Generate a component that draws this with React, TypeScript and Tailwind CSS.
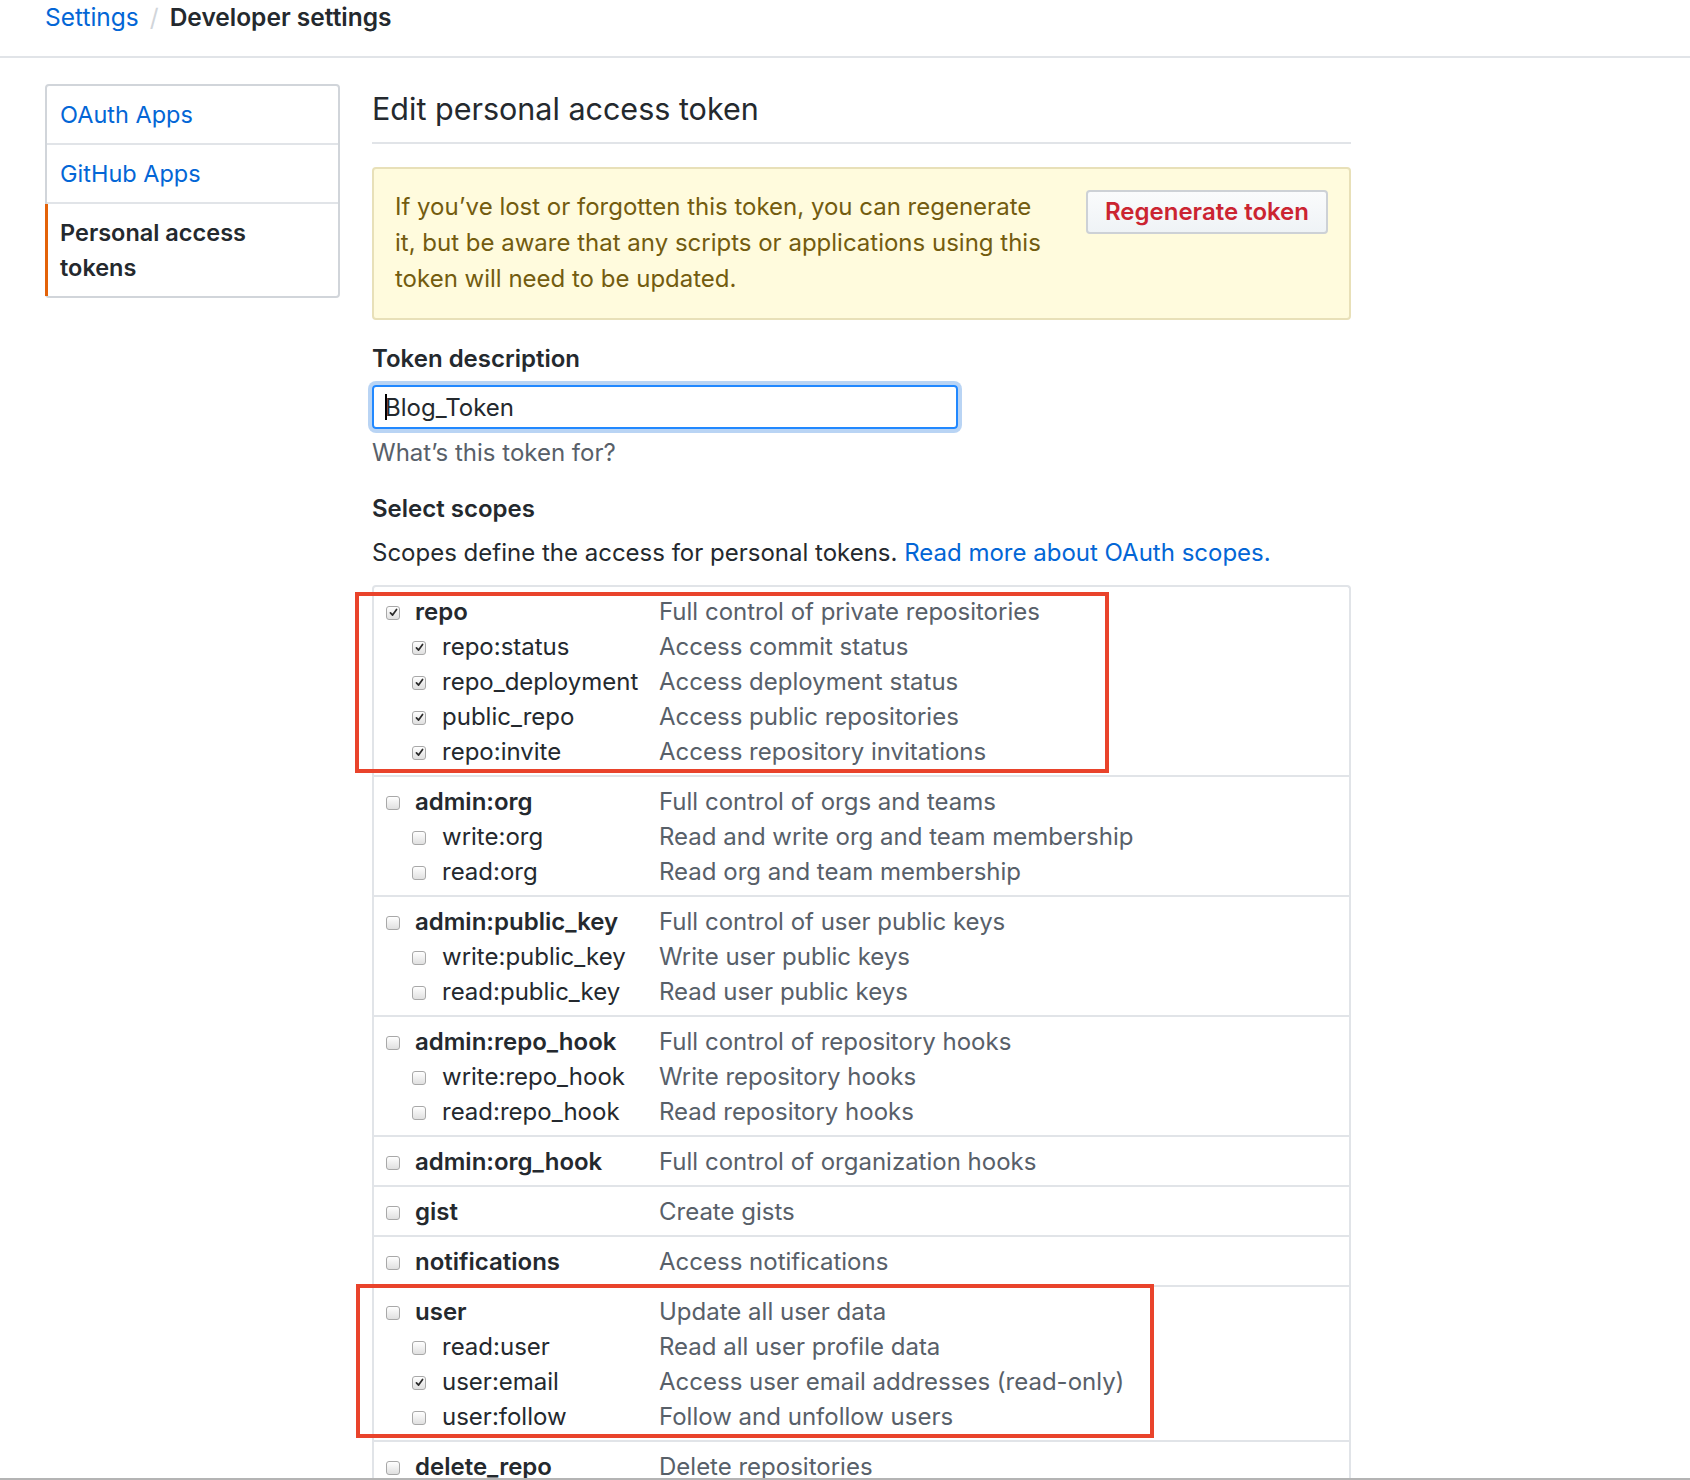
import React from 'react'

type Scope = { name: string; desc: string; checked?: boolean }
type Group = { parent: Scope; children?: Scope[] }

const groups: Group[] = [
  {
    parent: { name: 'repo', desc: 'Full control of private repositories', checked: true },
    children: [
      { name: 'repo:status', desc: 'Access commit status', checked: true },
      { name: 'repo_deployment', desc: 'Access deployment status', checked: true },
      { name: 'public_repo', desc: 'Access public repositories', checked: true },
      { name: 'repo:invite', desc: 'Access repository invitations', checked: true },
    ],
  },
  {
    parent: { name: 'admin:org', desc: 'Full control of orgs and teams' },
    children: [
      { name: 'write:org', desc: 'Read and write org and team membership' },
      { name: 'read:org', desc: 'Read org and team membership' },
    ],
  },
  {
    parent: { name: 'admin:public_key', desc: 'Full control of user public keys' },
    children: [
      { name: 'write:public_key', desc: 'Write user public keys' },
      { name: 'read:public_key', desc: 'Read user public keys' },
    ],
  },
  {
    parent: { name: 'admin:repo_hook', desc: 'Full control of repository hooks' },
    children: [
      { name: 'write:repo_hook', desc: 'Write repository hooks' },
      { name: 'read:repo_hook', desc: 'Read repository hooks' },
    ],
  },
  { parent: { name: 'admin:org_hook', desc: 'Full control of organization hooks' } },
  { parent: { name: 'gist', desc: 'Create gists' } },
  { parent: { name: 'notifications', desc: 'Access notifications' } },
  {
    parent: { name: 'user', desc: 'Update all user data' },
    children: [
      { name: 'read:user', desc: 'Read all user profile data' },
      { name: 'user:email', desc: 'Access user email addresses (read-only)', checked: true },
      { name: 'user:follow', desc: 'Follow and unfollow users' },
    ],
  },
  { parent: { name: 'delete_repo', desc: 'Delete repositories' } },
]

function Checkbox({ checked }: { checked?: boolean }) {
  return (
    <span className="mt-[3px] w-[14px] h-[14px] shrink-0 rounded-[3px] border border-[#a8a8a8] bg-gradient-to-b from-white to-[#e0e0e0] flex items-center justify-center">
      {checked && (
        <svg viewBox="0 0 10 10" className="w-[9px] h-[9px]">
          <path d="M1.6 5.4 L4 7.9 L8.4 1.6" stroke="#2b2b2b" strokeWidth="1.9" fill="none" strokeLinecap="round" strokeLinejoin="round" />
        </svg>
      )}
    </span>
  )
}

function ScopeRow({ scope, child }: { scope: Scope; child?: boolean }) {
  return (
    <div className="flex h-[35px] items-center">
      <div className={`w-[285px] shrink-0 flex items-center ${child ? 'pl-[38px]' : 'pl-[12px]'}`}>
        <Checkbox checked={scope.checked} />
        <span className={child ? 'ml-[16px]' : 'ml-[15px] font-semibold'}>{scope.name}</span>
      </div>
      <div className="text-[#586069]">{scope.desc}</div>
    </div>
  )
}

export default function App() {
  return (
    <div className="h-[1480px] overflow-hidden border-b-2 border-[#b4b4b4] bg-white text-[#24292e] font-['Inter','Liberation_Sans',sans-serif] text-[24px] leading-[35px]">
      {/* Breadcrumb */}
      <div className="h-[58px] border-b-2 border-[#e1e4e8] pl-[45px] text-[24.5px] flex items-start">
        <span className="text-[#0366d6]">Settings</span>
        <span className="mx-[11px] text-[#d1d5da]">/</span>
        <span className="font-semibold">Developer settings</span>
      </div>

      <div className="flex pl-[45px] pt-[26px] gap-[32px]">
        {/* Sidebar */}
        <nav className="w-[295px] shrink-0 self-start border-2 border-[#d1d5da] rounded-[4px] text-[23.5px]">
          <div className="px-[13px] py-[11px] border-b-2 border-[#e1e4e8] text-[#0366d6]">OAuth Apps</div>
          <div className="px-[13px] py-[11px] border-b-2 border-[#e1e4e8] text-[#0366d6]">GitHub Apps</div>
          <div className="relative px-[13px] py-[11px] font-semibold">
            <span className="absolute -left-[2px] top-0 bottom-0 w-[3px] bg-[#e36209]" />
            Personal access
            <br />
            tokens
          </div>
        </nav>

        {/* Main */}
        <main className="w-[979px] shrink-0">
          <h2 className="text-[30.5px] leading-[50px] pb-[8px] border-b-2 border-[#e1e4e8]">Edit personal access token</h2>

          <div className="mt-[23px] flex items-start justify-between rounded-[4px] border-2 border-[#e8e0b8] bg-[#fffbdd] px-[21px] pt-[20px] pb-[21px]">
            <p className="w-[658px] text-[#735c0f] leading-[36px]">
              If you’ve lost or forgotten this token, you can regenerate it, but be aware that any scripts or applications using this token will need to be updated.
            </p>
            <button className="mt-[1px] h-[44px] px-[17px] rounded-[4px] border-2 border-[#cdd1d6] bg-gradient-to-b from-[#fafbfc] to-[#eff3f6] text-[#cb2431] font-semibold leading-none">
              Regenerate token
            </button>
          </div>

          <div className="mt-[21px] font-semibold">Token description</div>
          <div className="mt-[9px] w-[586px] h-[44px] rounded-[4px] border-2 border-[#2188ff] shadow-[0_0_0_4px_rgba(3,102,214,0.28)] flex items-center pl-[11px]">
            <span className="w-[2px] h-[26px] bg-black -mr-[2px]" />
            <span>Blog_Token</span>
          </div>
          <div className="mt-[6px] text-[#586069]">What’s this token for?</div>

          <div className="mt-[21px] font-semibold">Select scopes</div>
          <div className="mt-[9px]">
            Scopes define the access for personal tokens. <span className="text-[#0366d6]">Read more about OAuth scopes.</span>
          </div>

          <div className="relative mt-[15px] border-2 border-b-0 border-[#e1e4e8] rounded-t-[4px]">
            {groups.map((g) => (
              <div key={g.parent.name} className="py-[6.5px] border-b-2 border-[#e1e4e8]">
                <ScopeRow scope={g.parent} />
                {g.children?.map((c) => (
                  <ScopeRow key={c.name} scope={c} child />
                ))}
              </div>
            ))}

            {/* annotation boxes */}
            <div className="absolute -left-[19px] top-[5px] w-[754px] h-[181px] border-4 border-[#e9432b]" />
            <div className="absolute -left-[18px] top-[697px] w-[798px] h-[154px] border-4 border-[#e9432b]" />
          </div>
        </main>
      </div>
    </div>
  )
}
